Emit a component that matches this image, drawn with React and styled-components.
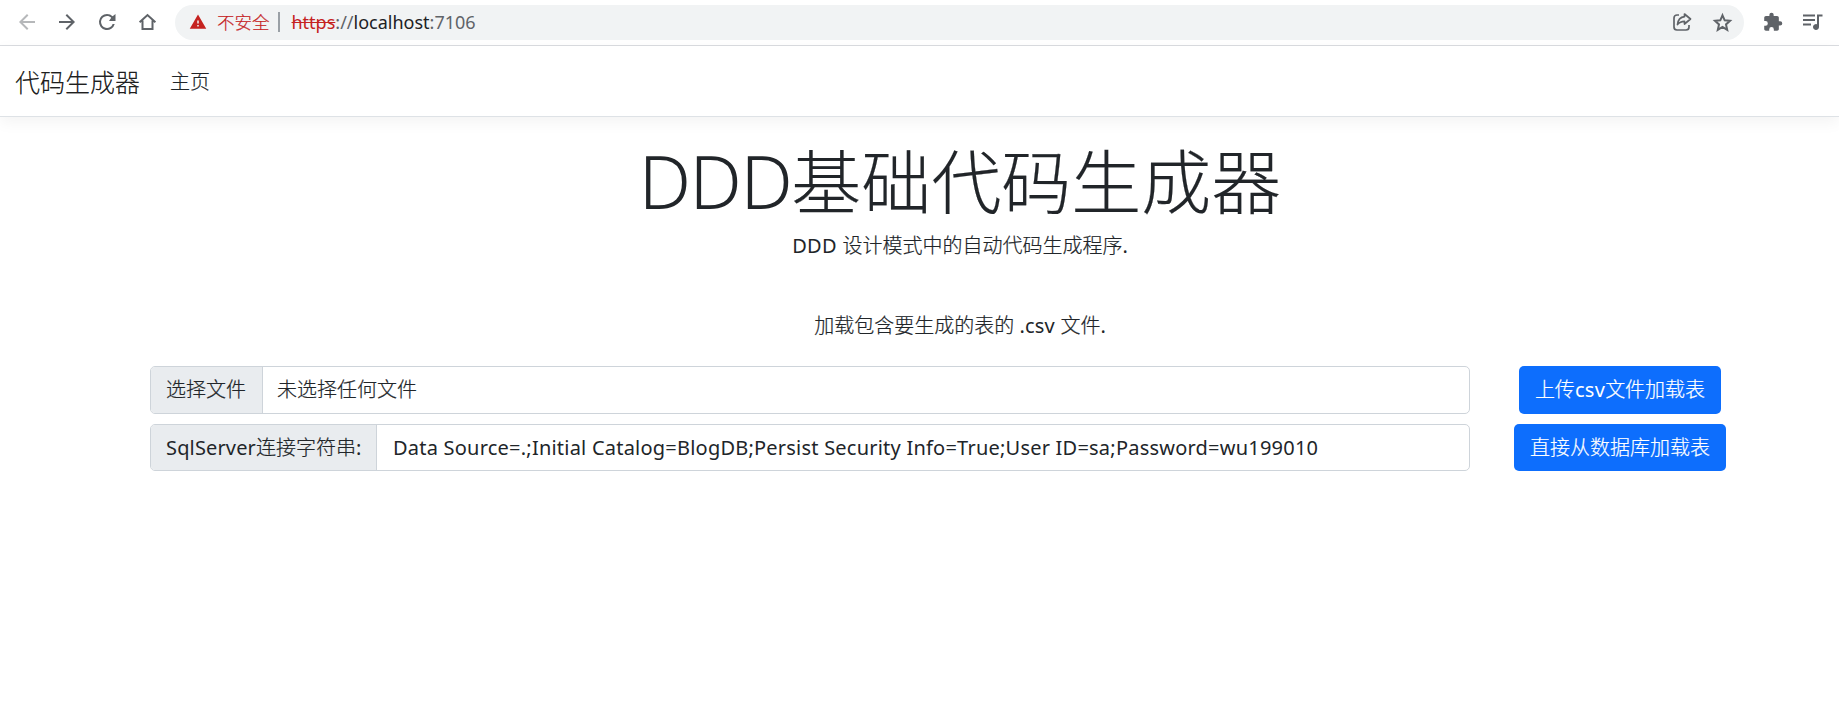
import React from "react";
import styled, { createGlobalStyle } from "styled-components";

const GlobalStyle = createGlobalStyle`
  *, *::before, *::after { box-sizing: border-box; }
  html { font-size: 20px; }
  body {
    margin: 0;
    background: #fff;
    color: #212529;
    font-family: "Noto Sans", "Noto Sans CJK SC", sans-serif;
    font-size: 20px;
    line-height: 30px;
    overflow: hidden;
    -webkit-text-stroke: 0.2px currentColor;
  }
`;

const Latin = styled.span`
  font-size: ${(p) => p.$size || 20}px;
  font-weight: ${(p) => p.$weight || 400};
  letter-spacing: ${(p) => p.$track || 0}px;
  -webkit-text-stroke: 0;
`;

const Toolbar = styled.header`
  display: flex;
  align-items: center;
  height: 46px;
  padding: 0 15px 1px 15px;
  border-bottom: 1px solid #dadce0;
`;

const NavIcons = styled.div`
  display: flex;
  gap: 16px;
  margin-right: 16px;
  color: #5f6368;
`;

const Icon = styled.svg`
  display: block;
  flex: none;
  width: ${(p) => p.$size || 24}px;
  height: ${(p) => p.$size || 24}px;
  fill: currentColor;
  opacity: ${(p) => (p.$dim ? 0.45 : 1)};
`;

const AddressBar = styled.div`
  display: flex;
  align-items: center;
  width: 1570px;
  height: 35px;
  padding: 0 10px 0 14px;
  border-radius: 18px;
  background: #f1f3f4;
  font-size: 17.5px;
  white-space: nowrap;
`;

const Warning = styled.span`
  display: flex;
  align-items: center;
  gap: 10px;
  color: #c5221f;
  font-weight: 300;
`;

const Divider = styled.i`
  width: 2px;
  height: 20px;
  margin: 0 12px 0 8px;
  background: #9aa0a6;
`;

const Url = styled.span`
  flex: 1;
  color: #5f6368;
  font-size: 18px;
  -webkit-text-stroke: 0;
  s { color: #c5221f; }
  b { color: #202124; font-weight: 400; }
`;

const BarActions = styled.div`
  display: flex;
  gap: 16px;
  color: #5f6368;
`;

const ToolActions = styled.div`
  display: flex;
  gap: 16px;
  margin-left: 16px;
  color: #5f6368;
`;

const Navbar = styled.nav`
  display: flex;
  align-items: center;
  height: 71px;
  padding: 1px 15px 0;
  border-bottom: 1px solid #dee2e6;
  box-shadow: 0 5px 15px rgba(0, 0, 0, 0.05);
  font-weight: 300;
`;

const Brand = styled.a`
  margin-right: 30px;
  font-size: 25px;
  color: rgba(0, 0, 0, 0.9);
`;

const NavLink = styled.a`
  color: #212529;
`;

const Page = styled.main`
  width: 1620px;
  margin-left: 150px;
  padding-top: 22px;
`;

const Intro = styled.section`
  text-align: center;
  font-weight: 300;
`;

const Title = styled.h1`
  margin: 0 0 7px;
  font-size: 70px;
  line-height: 84px;
  font-weight: 300;
`;

const Text = styled.p`
  margin: 0 0 ${(p) => p.$gap}px;
`;

const Form = styled.form`
  display: grid;
  grid-template-columns: 1320px 300px;
  row-gap: 10px;
  font-weight: 300;
`;

const Group = styled.div`
  display: flex;
  height: ${(p) => p.$height}px;
  border: 1px solid #ced4da;
  border-radius: 5px;
  overflow: hidden;
  white-space: nowrap;
`;

const Addon = styled.label`
  display: flex;
  align-items: center;
  width: ${(p) => p.$width}px;
  padding-left: 15px;
  border-right: 1px solid #ced4da;
  background: #e9ecef;
`;

const Value = styled.div`
  display: flex;
  align-items: center;
  padding-left: ${(p) => p.$pad}px;
`;

const Button = styled.button`
  justify-self: center;
  width: ${(p) => p.$width}px;
  height: ${(p) => p.$height}px;
  padding: 0;
  border: 0;
  border-radius: 5px;
  background: #0d6efd;
  color: #fff;
  font: inherit;
  white-space: nowrap;
`;

function Glyph({ d, dim, size, children }) {
  return (
    <Icon viewBox="0 0 24 24" $dim={dim} $size={size}>
      {d ? <path d={d} /> : children}
    </Icon>
  );
}

export default function App() {
  return (
    <>
      <GlobalStyle />
      <Toolbar>
        <NavIcons>
          <Glyph dim d="M20 11H7.83l5.59-5.59L12 4l-8 8 8 8 1.41-1.41L7.83 13H20v-2z" />
          <Glyph d="M12 4l-1.41 1.41L16.17 11H4v2h12.17l-5.58 5.59L12 20l8-8z" />
          <Glyph d="M17.65 6.35A7.96 7.96 0 0 0 12 4a8 8 0 1 0 7.73 10h-2.08A6 6 0 1 1 12 6c1.66 0 3.14.69 4.22 1.78L14 11h6.500V4z" />
          <Glyph>
            <path d="M4.6 12.300L12.500 5l7.900 7.300M7.500 10.500V19h10v-8.500" fill="none" stroke="currentColor" strokeWidth="2" />
          </Glyph>
        </NavIcons>
        <AddressBar>
          <Warning>
            <Glyph size={18} d="M1 21h22L12 2zm12-3h-2v-2h2zm0-4h-2v-4h2z" />
            不安全
          </Warning>
          <Divider />
          <Url><s>https</s>://<b>localhost</b>:7106</Url>
          <BarActions>
            <Glyph>
              <path d="M9 5H7a3 3 0 0 0-3 3v9a3 3 0 0 0 3 3h9a3 3 0 0 0 3-3v-2M14.500 4l6 5-6 5v-2.700c-3 0-5 .7-7 3.200C8 10 10 7.200 14.500 6.700z" fill="none" stroke="currentColor" strokeWidth="1.700" strokeLinejoin="round" />
            </Glyph>
            <Glyph>
              <path d="M12.500 5.300l2.200 5 5.300.5-4 3.600 1.200 5.400-4.700-2.900-4.700 2.900L9 14.400l-4-3.600 5.300-.5z" fill="none" stroke="currentColor" strokeWidth="2" />
            </Glyph>
          </BarActions>
        </AddressBar>
        <ToolActions>
          <Glyph>
            <path transform="translate(2.500 1.800) scale(.86)" d="M20.500 11H19V7c0-1.100-.9-2-2-2h-4V3.500a2.500 2.500 0 0 0-5 0V5H4c-1.100 0-2 .9-2 2v3.800h1.500a2.700 2.700 0 0 1 0 5.400H2V20c0 1.100.9 2 2 2h3.800v-1.500a2.700 2.700 0 0 1 5.400 0V22H17c1.100 0 2-.9 2-2v-4h1.500a2.500 2.500 0 0 0 0-5z" />
          </Glyph>
          <Glyph d="M15 4.500H3v2h12zm0 4.500H3v2h12zM3 15.500h8v-2H3zM17 4.500v9.680A3 3 0 1 0 19 17V6.500h3.500v-2z" />
        </ToolActions>
      </Toolbar>
      <Navbar>
        <Brand>代码生成器</Brand>
        <NavLink>主页</NavLink>
      </Navbar>
      <Page>
        <Intro>
          <Title><Latin $size={73.5} $weight={300} $track={-1.5}>DDD</Latin>基础代码生成器</Title>
          <Text $gap={50}><Latin $track={0.3}>DDD </Latin>设计模式中的自动代码生成程序<Latin>.</Latin></Text>
          <Text $gap={25}>加载包含要生成的表的 <Latin $track={0.22}>.csv </Latin>文件<Latin>.</Latin></Text>
        </Intro>
        <Form>
          <Group $height={48}>
            <Addon $width={112}>选择文件</Addon>
            <Value $pad={14}>未选择任何文件</Value>
          </Group>
          <Button type="button" $width={202} $height={48}>上传<Latin $track={0.3}>csv</Latin>文件加载表</Button>
          <Group $height={47}>
            <Addon $width={226}><Latin $track={0.15}>SqlServer</Latin>连接字符串<Latin>:</Latin></Addon>
            <Value $pad={16}>
              <Latin $track={0.22}>Data Source=.;Initial Catalog=BlogDB;Persist Security Info=True;User ID=sa;Password=wu199010</Latin>
            </Value>
          </Group>
          <Button type="button" $width={212} $height={47}>直接从数据库加载表</Button>
        </Form>
      </Page>
    </>
  );
}
